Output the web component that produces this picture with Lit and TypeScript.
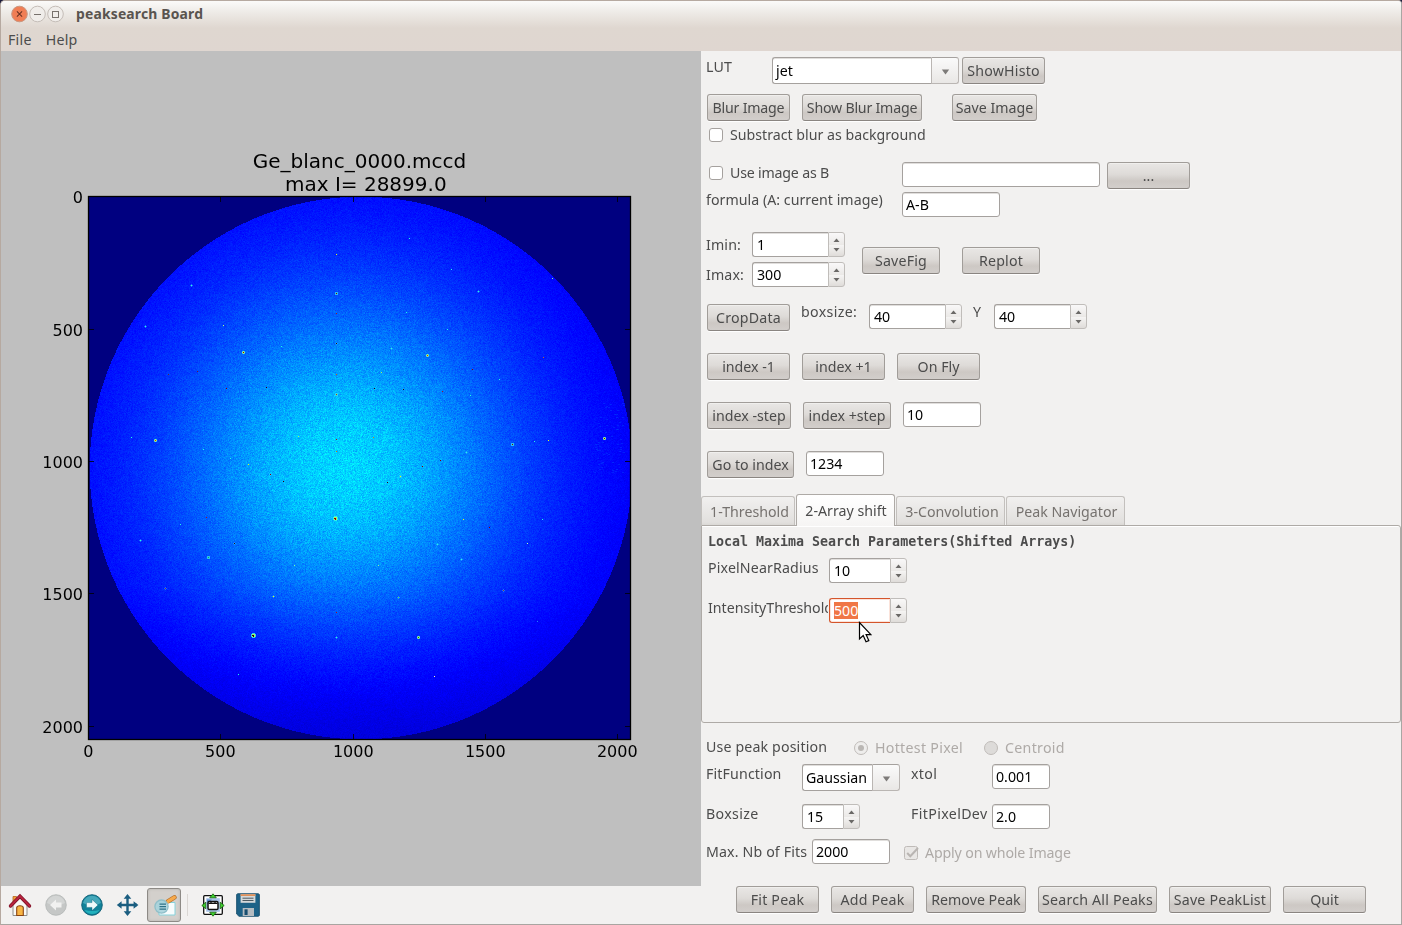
import { LitElement, html, css, svg } from "lit";
import { customElement, query } from "lit/decorators.js";

/* ---------- detector image ---------- */

const W = 542;
const H = 543;

/* x, y, size class (1 = single pixel, 2 = small halo, 3 = strong), colour */
type Spot = [number, number, number, string];
const RED = "#8a0000";
const CY = "#20ffe0";
const YE = "#e8ff10";
const DK = "#300010";
const SPOTS: Spot[] = [
  [336, 254, 1, YE], [336, 293.5, 2.2, RED], [336, 313, 1, "#a02020"], [336, 343, 1.5, DK],
  [336, 374, 1, "#d86000"], [336, 394.5, 2.2, "#c04000"], [336, 439, 1, "#b01010"], [336, 451, 1, "#d88000"],
  [335.5, 518, 3, RED], [336, 612, 1, "#b01010"], [336.5, 637, 1.5, CY], [243.5, 352, 2.5, RED],
  [427, 355, 2.5, "#d03000"], [191, 285, 1.5, CY], [145, 326, 1.5, CY], [223, 325, 1, "#b0ff80"],
  [155, 440, 2.5, "#d04000"], [131, 437, 1, CY], [604, 438, 2.5, RED], [512, 444, 2.2, RED],
  [534, 441, 1, CY], [548, 440, 1, YE], [253.5, 635.5, 3, DK], [418, 637, 2.5, "#206020"],
  [434, 676, 1, "#f8ffb0"], [238, 674, 1, CY], [208, 557, 2.2, "#20a060"], [140, 540, 1.5, CY],
  [165, 588, 1.5, "#803050"], [273.5, 596.5, 1.5, YE], [398, 597.5, 1.5, "#60d060"], [503, 590, 1.5, "#803050"],
  [461, 559, 1.5, CY], [294, 565, 1, "#80ffa0"], [378, 565, 1, "#80ffa0"], [437, 544, 1.5, CY],
  [234, 543, 1.5, DK], [489, 527, 1, RED], [463, 519, 1, YE], [527, 543, 1, "#b0ffb0"],
  [180, 524, 1, CY], [206, 517, 1, "#a02020"], [270, 474, 1.5, RED], [283.5, 481, 1, DK],
  [400, 476, 2, YE], [387.5, 482, 1, DK], [422, 466, 1, RED], [440, 460, 1, RED],
  [466, 452, 1.5, CY], [248, 464, 1, YE], [230.5, 458, 1, CY], [203, 449, 1, CY],
  [298, 436, 1, "#a0ff60"], [373, 437, 1, "#d88000"], [266.5, 387, 1, DK], [374, 388, 1, DK],
  [403, 389, 1, DK], [381, 372, 1, "#a0ff60"], [226, 388, 1, RED], [197, 371, 1, "#602040"],
  [168, 374, 1, "#602040"], [442, 391, 1, "#a02020"], [472, 369, 1, RED], [499, 379, 1, CY],
  [543, 357, 1, "#c06030"], [409, 238, 1, CY], [478, 291, 1.5, CY], [451, 269, 1, CY],
  [552, 278, 1, "#80ff90"], [406, 312, 1, CY], [447, 329, 1, CY], [391, 348, 1.5, CY],
  [281, 346, 1, CY], [542, 519, 1, CY], [537, 621, 1, "#2080ff"], [470, 395, 1, CY],
];

function jet(v: number): [number, number, number] {
  const ch = (c: number) => Math.max(0, Math.min(1, 1.5 - Math.abs(4 * v - c)));
  return [255 * ch(3), 255 * ch(2), 255 * ch(1)];
}

@customElement("detector-image")
class DetectorImage extends LitElement {
  static styles = css`
    :host { display: block; }
    canvas { display: block; }
  `;

  @query("canvas") canvas!: HTMLCanvasElement;

  firstUpdated() {
    const ctx = this.canvas.getContext("2d")!;
    const img = ctx.createImageData(W, H);
    let seed = 12345;
    const rnd = () => {
      seed = (seed + 0x6d2b79f5) | 0;
      let t = Math.imul(seed ^ (seed >>> 15), 1 | seed);
      t = (t + Math.imul(t ^ (t >>> 7), 61 | t)) ^ t;
      return ((t ^ (t >>> 14)) >>> 0) / 4294967296;
    };
    for (let y = 0; y < H; y++) {
      for (let x = 0; x < W; x++) {
        const i = (y * W + x) * 4;
        let c: [number, number, number] = [0, 0, 128];
        if (Math.hypot(x - 272.5, y - 271.5) < 271.3) {
          const dx = x - 255;
          const dy = y - 271;
          const sx = dx > 0 ? 126 : 124;
          const sy = dy > 0 ? 116 : 130;
          const g = Math.exp(-(dx * dx) / (2 * sx * sx) - (dy * dy) / (2 * sy * sy));
          let v = 0.112 + 0.222 * g;
          v -= Math.max(0, dy - 120) * 0.00023 + Math.max(0, dx - 120) * 0.00004;
          const n = rnd() + rnd() + rnd() - 1.5;
          v += n * (0.011 + 0.028 * g);
          c = jet(v);
        }
        img.data[i] = c[0];
        img.data[i + 1] = c[1];
        img.data[i + 2] = c[2];
        img.data[i + 3] = 255;
      }
    }
    ctx.putImageData(img, 0, 0);

    ctx.fillStyle = "rgba(0,90,255,0.35)";
    for (let k = 0; k < 60; k++) {
      ctx.fillRect(Math.floor(504 + rnd() * 32), Math.floor(205 + rnd() * 75), 2, 1);
    }

    for (const [px, py, s, col] of SPOTS) {
      const x = Math.floor(px - 88);
      const y = Math.floor(py - 196);
      if (s >= 3) {
        ctx.fillStyle = "rgba(60,255,220,0.8)";
        ctx.fillRect(x - 1, y - 2, 3, 5);
        ctx.fillRect(x - 2, y - 1, 5, 3);
        ctx.fillStyle = "#a8f060";
        ctx.fillRect(x - 1, y - 1, 3, 3);
        ctx.fillStyle = col;
        ctx.fillRect(x, y, 1, 2);
        ctx.fillRect(x - 1, y, 2, 1);
      } else if (s >= 2) {
        ctx.fillStyle = s > 2 ? "rgba(60,240,230,0.7)" : "rgba(60,220,240,0.45)";
        ctx.fillRect(x - 1, y - 1, 3, 3);
        if (s > 2.3) {
          ctx.fillStyle = "#a8f070";
          ctx.fillRect(x, y - 1, 1, 3);
          ctx.fillRect(x - 1, y, 3, 1);
        }
        ctx.fillStyle = col;
        ctx.fillRect(x, y, 1, 1);
      } else {
        if (s > 1) {
          ctx.fillStyle = "rgba(60,220,255,0.4)";
          ctx.fillRect(x - 1, y, 3, 1);
          ctx.fillRect(x, y - 1, 1, 3);
        }
        ctx.fillStyle = col;
        ctx.fillRect(x, y, 1, 1);
      }
    }
  }

  render() {
    return html`<canvas width=${W} height=${H}></canvas>`;
  }
}

/* ---------- small widgets ---------- */

const btn = (t: string, cls = "") => html`<button class="btn ${cls}">${t}</button>`;
const label = (t: string, cls = "") => html`<span class="label ${cls}">${t}</span>`;
const entry = (t: string) => html`<div class="entry"><span>${t}</span></div>`;
const up = html`<svg class="arr" width="7" height="4" viewBox="0 0 7 4"><path d="M0.5 4L3.5 0.4L6.5 4z" fill="#6b6967"/></svg>`;
const down = html`<svg class="arr" width="7" height="4" viewBox="0 0 7 4"><path d="M0.5 0L3.5 3.6L6.5 0z" fill="#6b6967"/></svg>`;
const spin = (t: string, focus = false) => html`
  <div class="spin ${focus ? "focus" : ""}">
    <div class="spin-text"><span class=${focus ? "sel" : ""}>${t}</span></div>
    <div class="spin-btns">${up}${down}</div>
  </div>`;
const combo = (t: string) => html`
  <div class="combo">
    <div class="combo-text">${t}</div>
    <div class="combo-btn"><svg width="9" height="6" viewBox="0 0 9 6"><path d="M0.8 0.5H8.2L4.5 5.5z" fill="#7d7b79"/></svg></div>
  </div>`;
const check = (t: string, cls = "") => html`<div class="check ${cls}"><i class="box"></i><span>${t}</span></div>`;

const TICKS = [0, 500, 1000, 1500, 2000];

@customElement("app-root")
class AppRoot extends LitElement {
  static styles = css`
    :host {
      display: block;
      width: 1402px;
      height: 925px;
      background: #1c1c3c;
      font: 14.2px/20px "Noto Sans", "Open Sans", sans-serif;
      color: #4c4c4c;
      overflow: hidden;
    }
    * { box-sizing: border-box; }
    .window {
      width: 1402px;
      height: 925px;
      border: 1px solid #b6a9a0;
      border-right-color: #a9a6a3;
      border-bottom-color: #a8a5a1;
      border-radius: 5px 4px 0 0;
      background: #f2f1f0;
      display: flex;
      flex-direction: column;
      overflow: hidden;
    }
    .head {
      height: 50px;
      flex: none;
      background: linear-gradient(#fbfaf9 0, #eeebe7 11px, #dfd7d0 27px, #dfd6d0 100%);
    }
    .title {
      height: 26px;
      display: flex;
      align-items: center;
      padding-left: 10px;
      font-weight: 700;
      font-size: 13.9px;
      letter-spacing: 0.18px;
      color: #59544f;
    }
    .title svg { display: block; margin-right: 12px; }
    .menu {
      display: flex;
      gap: 14px;
      padding: 3px 0 0 7px;
      letter-spacing: 0.25px;
      color: #4c4c4c;
    }
    .body { display: flex; height: 873px; }
    .left { width: 700px; display: flex; flex-direction: column; }
    .figure { height: 835px; background: #bfbfbf; display: grid; }
    .figure > * { grid-area: 1 / 1; }
    .figure detector-image { margin: 145px 0 0 87px; }
    .figure svg { display: block; font-family: "DejaVu Sans", sans-serif; }
    .toolbar {
      height: 38px;
      display: flex;
      align-items: center;
      padding-left: 6px;
    }
    .toolbar svg { display: block; }
    .tool { width: 36px; height: 34px; display: grid; place-items: center; }
    .tool.home { width: 26px; margin-right: 5px; }
    .tool.on {
      width: 34px;
      border: 1px solid #8d8a86;
      border-radius: 3px;
      background: #d3d0cc;
      box-shadow: inset 0 0 3px #b5b2ae;
      margin-left: 1px;
    }
    .sep { width: 1px; height: 22px; background: #dad7d4; margin: 0 7px 0 6px; }
    .tool.save { width: 34px; }

    .right { width: 700px; }
    .row {
      display: grid;
      align-items: start;
      justify-items: stretch;
      padding-left: 5px;
    }
    .row > :nth-child(2) { grid-column: 3; }
    .row > :nth-child(3) { grid-column: 5; }
    .row > :nth-child(4) { grid-column: 7; }
    .row > :nth-child(5) { grid-column: 9; }
    .row > :nth-child(6) { grid-column: 11; }

    .r-lut { grid-template-columns: 60px 6px 187px 3px 83px; height: 43px; padding-top: 6px; }
    .r-blur { grid-template-columns: 83px 12px 120px 30px 85px; height: 31px; padding: 0 0 0 6px; }
    .r-sub { grid-template-columns: 300px; height: 37px; padding-left: 8px; }
    .r-use { grid-template-columns: 190px 3px 198px 7px 83px; height: 30px; padding-left: 8px; }
    .r-formula { grid-template-columns: 190px 6px 98px; height: 40px; }
    .levels { display: flex; height: 72px; }
    .pair { width: 139px; }
    .r-imin { grid-template-columns: 42px 4px 93px; height: 30px; }
    .levels .btns { display: grid; grid-template-columns: 78px 78px; gap: 22px; padding: 15px 0 0 22px; align-items: start; }
    .r-crop { grid-template-columns: 83px 11px 60px 8px 93px 11px 16px 5px 93px; height: 49px; padding-left: 6px; }
    .r-idx { grid-template-columns: 83px 12px 83px 12px 83px; height: 49px; padding-left: 6px; }
    .r-step { grid-template-columns: 84px 12px 88px 12px 78px; height: 49px; padding-left: 6px; }
    .r-goto { grid-template-columns: 87px 12px 78px; height: 43px; padding-left: 6px; }

    .label { white-space: nowrap; height: 20px; letter-spacing: 0.14px; }
    .up2 { margin-top: -2px; letter-spacing: 0.35px; }
    .up2b { margin-top: -2px; letter-spacing: 0.03px; }
    .dn1 { margin-top: 1px; letter-spacing: -0.2px; }
    .dn3 { margin-top: 3px; }
    .dn4 { margin-top: 4px; letter-spacing: -0.15px; }
    .clip { overflow: hidden; letter-spacing: 0; }
    .wide { letter-spacing: 0.36px; }

    .btn {
      height: 27px;
      padding: 0;
      margin: 0;
      border: 1px solid #a19d99;
      border-bottom-color: #8a8581;
      border-radius: 3px;
      background: linear-gradient(#e9e7e5 0, #dedbd8 45%, #cdc8c4 72%, #d2cecb 100%);
      box-shadow: inset 0 1px 0 #f0efed, 0 1px 1px #ffffff;
      font: inherit;
      color: #4c4c4c;
      text-align: center;
      white-space: nowrap;
    }
    .btn.tight { letter-spacing: -0.22px; }
    .btn.loose { letter-spacing: 0.2px; }
    .entry {
      height: 25px;
      border: 1px solid #a5a19e;
      border-radius: 3px;
      background: #fff;
      box-shadow: inset 0 1px 0 #e0dedc;
      color: #000;
      padding: 1px 0 0 3px;
      line-height: 21px;
    }
    .spin { height: 25px; display: flex; color: #000; }
    .spin-text {
      flex: 1;
      border: 1px solid #a5a19e;
      border-right: 0;
      border-radius: 3px 0 0 3px;
      background: #fff;
      box-shadow: inset 0 1px 0 #e0dedc;
      padding: 2px 0 0 4px;
      line-height: 20px;
    }
    .spin-btns {
      width: 17px;
      border: 1px solid #c0bdba;
      border-radius: 0 3px 3px 0;
      background: linear-gradient(#f9f8f8, #ebe9e7 50%, #f6f5f4 51%, #dfdcd9);
      display: flex;
      flex-direction: column;
      align-items: center;
      gap: 6px;
      padding-top: 5px;
    }
    .arr { display: block; flex: none; }
    .focus .spin-text { border-color: #d4552b; box-shadow: inset 0 0 0 1px #fbe3da; }
    .sel { background: #f07746; color: #fff; display: inline-block; height: 17px; line-height: 18px; }
    .combo { height: 27px; display: flex; color: #000; }
    .combo-text {
      flex: 1;
      border: 1px solid #a5a19e;
      border-right: 0;
      border-radius: 3px 0 0 3px;
      background: #fff;
      box-shadow: inset 0 1px 0 #e0dedc;
      padding: 2px 0 0 3px;
      line-height: 21px;
    }
    .combo-btn {
      width: 28px;
      border: 1px solid #bab6b3;
      border-top-color: #a5a19e;
      border-radius: 0 3px 3px 0;
      background: linear-gradient(#fafafa, #e9e7e5);
      display: grid;
      place-items: center;
      padding-top: 2px;
    }
    .check { display: flex; gap: 7px; white-space: nowrap; height: 20px; align-items: center; }
    .box { width: 14px; height: 14px; border: 1px solid #a5a19e; border-radius: 3px; background: #fff; }
    .check svg { display: block; }
    .off { color: #aeaaa7; }
    .off.dn1 { letter-spacing: 0.3px; }
    .off.dn4 { gap: 6px; }

    .tabs { display: flex; align-items: flex-end; height: 31px; gap: 1px; }
    .tab {
      height: 29px;
      border: 1px solid #c3c0bd;
      border-bottom: 0;
      border-radius: 3px 3px 0 0;
      background: linear-gradient(#f1f0ef, #e2e0de 90%, #dad8d5);
      text-align: center;
      line-height: 29px;
      color: #76726f;
      white-space: nowrap;
    }
    .t1 { width: 94px; padding-left: 3px; }
    .t2 { width: 99px; padding-left: 1px; }
    .t3 { width: 109px; padding-left: 3px; }
    .t4 { width: 119px; padding-left: 2px; }
    .tab.active {
      height: 32px;
      margin-bottom: -1px;
      background: linear-gradient(#fff, #f6f5f4);
      border-color: #aeaaa6;
      color: #4c4c4c;
      line-height: 32px;
      z-index: 1;
    }
    .panel {
      height: 198px;
      border: 1px solid #aeaaa6;
      border-radius: 0 3px 3px 3px;
      box-shadow: inset 0 1px 0 #fff;
      padding: 6px 0 0 6px;
    }
    .panel h3 {
      margin: 0 0 6px;
      height: 20px;
      font: 700 13.3px/19px "DejaVu Sans Mono", monospace;
      color: #4c4c4c;
    }
    .r-p { grid-template-columns: 120px 1px 78px; height: 40px; padding-left: 0; }

    .r-pos { grid-template-columns: 140px 8px 120px 10px 120px; height: 27px; }
    .bottom { padding-top: 14px; }
    .r-fit { grid-template-columns: 90px 6px 98px 11px 76px 5px 58px; height: 40px; }
    .r-box { grid-template-columns: 90px 6px 58px 51px 76px 5px 58px; height: 35px; }
    .r-max { grid-template-columns: 103px 3px 78px 14px 180px; height: 47px; }
    .actions {
      grid-template-columns: 83px 12px 83px 12px 100px 12px 119px 12px 102px 12px 83px;
      padding-left: 35px;
    }
    .cursor { position: absolute; left: 858px; top: 621px; display: block; }
  `;

  private axes() {
    const x0 = 87.5;
    const y0 = 145.5;
    const k = 0.2647;
    return html`<svg width="700" height="835" viewBox="0 0 700 835">
      <rect x="87.5" y="145.5" width="542" height="543" fill="none" stroke="#000" stroke-width="1.3" />
      ${TICKS.map((t) => {
        const x = Math.round(x0 + t * k - 0.5) + 0.5;
        const y = Math.round(y0 + t * k - 0.2) + 0.5;
        return svg`
          <path d="M${x} 688v-5M${x} 146v5M88 ${y}h5M629 ${y}h-5" stroke="#000" stroke-width="0.8" />
          <text x=${x - 0.2} y="706" text-anchor="middle" font-size="16">${t}</text>
          <text x="82" y=${y + 6.5} text-anchor="end" font-size="16">${t}</text>`;
      })}
      <text x="358.5" y="117" text-anchor="middle" font-size="20">Ge_blanc_0000.mccd</text>
      <text x="364.8" y="140" text-anchor="middle" font-size="20">max I= 28899.0</text>
    </svg>`;
  }

  private toolbar() {
    return html`<div class="toolbar">
      <div class="tool home"><svg width="24" height="24" viewBox="0 0 24 24">
        <path d="M5 3.5h3.5V10H5z" fill="#f3a13d" stroke="#b5651d" stroke-width=".8"/>
        <path d="M5 11.5L12 5L19 11.5V22.5H5z" fill="#f8f8f6" stroke="#8f8f8c"/>
        <path d="M8.7 22.5V14.8q0-2 3.3-2t3.3 2v7.7z" fill="#f8b544" stroke="#8b4513" stroke-width="1.1"/>
        <path d="M2.5 13L12 3.2L21.5 13" fill="none" stroke="#7c1025" stroke-width="3.4" stroke-linecap="round"/>
        <path d="M2.5 13L12 3.2L21.5 13" fill="none" stroke="#b8243f" stroke-width="1.9" stroke-linecap="round"/>
      </svg></div>
      <div class="tool"><svg width="24" height="24" viewBox="0 0 24 24">
        <circle cx="12" cy="12" r="10.3" fill="#c5c7c6" stroke="#b3b6b5" stroke-width=".8"/>
        <path d="M3 10a9.2 9.2 0 0 1 18 0q-9 5-18 0z" fill="#d3d5d4"/>
        <path d="M6 12L12 6.4V9.6H17.5V14.4H12V17.6z" fill="#f1f1f0"/>
      </svg></div>
      <div class="tool"><svg width="24" height="24" viewBox="0 0 24 24">
        <circle cx="12" cy="12" r="10.3" fill="#118299" stroke="#0b5d75" stroke-width=".9"/>
        <path d="M3 10a9.2 9.2 0 0 1 18 0q-9 5-18 0z" fill="#45a8ba"/>
        <path d="M4.5 17a9 9 0 0 0 15 0q-7 2-15 0z" fill="#22b1bd"/>
        <path d="M18 12L12 6.4V9.6H6.5V14.4H12V17.6z" fill="#eefafb" stroke="#0b6379" stroke-width=".4"/>
      </svg></div>
      <div class="tool"><svg width="24" height="24" viewBox="0 0 24 24">
        <path d="M11.5 3V21M3 12H21" stroke="#1b5e80" stroke-width="2.4"/>
        <path d="M11.5 1L15.3 5.8H7.7zM11.5 23L15.3 18.2H7.7zM.8 12L5.6 8.2V15.8zM22.4 12L17.6 8.2V15.8z" fill="#1b5e80"/>
      </svg></div>
      <div class="tool on"><svg width="26" height="24" viewBox="0 0 26 24">
        <path d="M8 9.5H24V22H8z" fill="#f7fcfc" stroke="#86d3dc"/>
        <path d="M17 8.4L23.4 4.4" stroke="#b5702b" stroke-width="4.6" stroke-linecap="round"/>
        <path d="M17 8.4L23.4 4.4" stroke="#f6a94b" stroke-width="3.2" stroke-linecap="round"/>
        <circle cx="10.5" cy="13.6" r="6.6" fill="#a9d3dc" fill-opacity=".9" stroke="#8fbfc9" stroke-width="1.3"/>
        <path d="M8.5 11.2H15M8.5 13.7H15M8.5 16.2H15" stroke="#2d7288" stroke-width="1.2"/>
      </svg></div>
      <div class="sep"></div>
      <div class="tool"><svg width="24" height="24" viewBox="0 0 24 24">
        <rect x="2.7" y="2.7" width="18.6" height="18.6" rx="1" fill="#fff" stroke="#111" stroke-width="1.3"/>
        <rect x="5.2" y="5.2" width="13.6" height="13.6" fill="#a8c4ea"/>
        <path d="M6 6.5h5l-5 5z" fill="#5b88c8"/>
        <rect x="7" y="8.6" width="10" height="8" rx="1.3" fill="#fff" stroke="#111" stroke-width="1.5"/>
        <path d="M7.5 10.3h9M10 9v1.5M14 9v1.5" stroke="#111" stroke-width="1.3"/>
        <path d="M12 .8L15.3 4.8H8.7zM12 23.2L15.3 19.2H8.7zM.8 12.5L4.8 9.2V15.8zM23.2 12.5L19.2 9.2V15.8z" fill="#3fd02e" stroke="#125c0c" stroke-width=".8"/>
      </svg></div>
      <div class="tool save"><svg width="24" height="24" viewBox="0 0 24 24">
        <path d="M1.5 .7H22.5L23.4 1.6V22.4L22.5 23.3H3L.6 21V1.6z" fill="#1d6287" stroke="#104766" stroke-width=".8"/>
        <path d="M4.6 1.2H19.4V9.8H4.6z" fill="#d5d8d9"/>
        <path d="M4.6 1.2H19.4V3H4.6z" fill="#e0915a"/>
        <path d="M6.5 5.2H17.5M6.5 7.5H17.5" stroke="#4d5a61" stroke-width="1"/>
        <path d="M6.7 15H18V23H6.7z" fill="#b5bcc1"/>
        <path d="M8.5 16.3H11.6V22H8.5z" fill="#184f70"/>
      </svg></div>
    </div>`;
  }

  render() {
    return html`<div class="window">
      <div class="head">
        <div class="title">
          <svg width="53" height="18" viewBox="0 0 53 18">
            <circle cx="8.5" cy="9" r="7.8" fill="#f07e55" stroke="#c9967f" />
            <path d="M5.9 6.4L11.1 11.6M11.1 6.4L5.9 11.6" stroke="#6a3323" stroke-width="1.1" />
            <circle cx="26.5" cy="9" r="7.8" fill="#f0edea" stroke="#c4bdb7" />
            <path d="M23 9.5H30" stroke="#77716c" stroke-width="1.1" />
            <circle cx="44.5" cy="9" r="7.8" fill="#f0edea" stroke="#c4bdb7" />
            <rect x="41.5" y="6.5" width="6" height="6" fill="none" stroke="#77716c" />
          </svg>
          <span>peaksearch Board</span>
        </div>
        <div class="menu"><span>File</span><span>Help</span></div>
      </div>

      <div class="body">
        <div class="left">
          <div class="figure"><detector-image></detector-image>${this.axes()}</div>
          ${this.toolbar()}
        </div>

        <div class="right">
          <div class="row r-lut">${label("LUT")}${combo("jet")}${btn("ShowHisto", "loose")}</div>
          <div class="row r-blur">${btn("Blur Image", "tight")}${btn("Show Blur Image", "tight")}${btn("Save Image")}</div>
          <div class="row r-sub">${check("Substract blur as background")}</div>
          <div class="row r-use">${check("Use image as B", "dn1")}${entry("")}${btn("...")}</div>
          <div class="row r-formula">${label("formula (A: current image)", "up2b")}${entry("A-B")}</div>
          <div class="levels">
            <div class="pair">
              <div class="row r-imin">${label("Imin:", "dn3")}${spin("1")}</div>
              <div class="row r-imin">${label("Imax:", "dn3")}${spin("300")}</div>
            </div>
            <div class="btns">${btn("SaveFig", "loose")}${btn("Replot", "loose")}</div>
          </div>
          <div class="row r-crop">${btn("CropData", "loose")}${label("boxsize:", "up2")}${spin("40")}${label("Y", "up2")}${spin("40")}</div>
          <div class="row r-idx">${btn("index -1")}${btn("index +1")}${btn("On Fly")}</div>
          <div class="row r-step">${btn("index -step")}${btn("index +step")}${entry("10")}</div>
          <div class="row r-goto">${btn("Go to index")}${entry("1234")}</div>

          <div class="tabs">
            <div class="tab t1">1-Threshold</div>
            <div class="tab t2 active">2-Array shift</div>
            <div class="tab t3">3-Convolution</div>
            <div class="tab t4">Peak Navigator</div>
          </div>
          <div class="panel">
            <h3>Local Maxima Search Parameters(Shifted Arrays)</h3>
            <div class="row r-p">${label("PixelNearRadius")}${spin("10")}</div>
            <div class="row r-p">${label("IntensityThreshold", "clip")}${spin("500", true)}</div>
          </div>

          <div class="bottom">
            <div class="row r-pos">
              ${label("Use peak position")}
              <div class="check off dn1">
                <svg width="14" height="14" viewBox="0 0 14 14"><circle cx="7" cy="7" r="6.5" fill="#eeedec" stroke="#bfbbb8"/><circle cx="7" cy="7" r="3" fill="#bab7b4"/></svg>
                <span>Hottest Pixel</span>
              </div>
              <div class="check off dn1">
                <svg width="14" height="14" viewBox="0 0 14 14"><circle cx="7" cy="7" r="6.5" fill="#dddbd9" stroke="#bfbbb8"/></svg>
                <span>Centroid</span>
              </div>
            </div>
            <div class="row r-fit">${label("FitFunction")}${combo("Gaussian")}${label("xtol", "wide")}${entry("0.001")}</div>
            <div class="row r-box">${label("Boxsize", "wide")}${spin("15")}${label("FitPixelDev", "wide")}${entry("2.0")}</div>
            <div class="row r-max">
              ${label("Max. Nb of Fits", "dn3")}
              ${entry("2000")}
              <div class="check off dn4">
                <svg width="15" height="15" viewBox="0 0 15 15"><rect x=".5" y=".5" width="13" height="13" rx="2" fill="#e9e7e5" stroke="#bfbbb8"/><path d="M3.2 7L6.3 10.3L14 2" fill="none" stroke="#b9b5b2" stroke-width="2"/></svg>
                <span>Apply on whole Image</span>
              </div>
            </div>
            <div class="row actions">
              ${btn("Fit Peak", "loose")}${btn("Add Peak", "loose")}${btn("Remove Peak")}${btn("Search All Peaks", "loose")}${btn("Save PeakList", "loose")}${btn("Quit")}
            </div>
          </div>
        </div>
      </div>

      <svg class="cursor" width="14" height="22" viewBox="0 0 14 22">
        <path d="M1.5 1.5V18L5.2 14.6L8 20.8L10.8 19.6L8.1 13.6H12.9z" fill="#fff" stroke="#000" stroke-width="1.2" />
      </svg>
    </div>`;
  }
}
